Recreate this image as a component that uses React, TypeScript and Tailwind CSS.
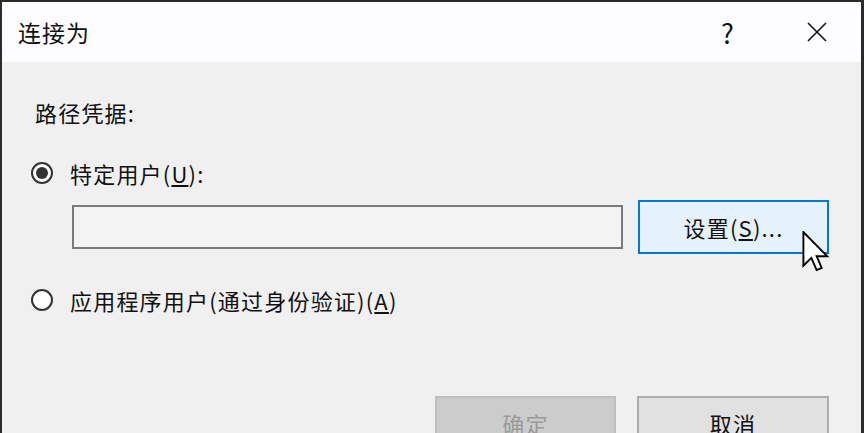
import React from "react";

const font = { fontFamily: '"Noto Sans CJK SC", "Noto Sans", sans-serif' };

const Radio = ({ checked }: { checked?: boolean }) => (
  <span className="flex h-[22px] w-[22px] shrink-0 items-center justify-center rounded-full border-2 border-[#333333] bg-white">
    {checked && <span className="h-[12px] w-[12px] rounded-full bg-[#333333]" />}
  </span>
);

const Cursor = () => (
  <svg className="absolute left-[799px] top-[229px]" width="30" height="42" viewBox="0 0 13 20">
    <path
      d="M0.5 0.5 L0.5 16.5 L4.3 12.8 L6.8 18.6 L9.2 17.6 L6.8 12 L11.8 12 Z"
      fill="#fff"
      stroke="#000"
      strokeWidth="0.9"
      strokeLinejoin="miter"
    />
  </svg>
);

export default function App() {
  return (
    <div
      style={font}
      className="relative h-[433px] w-[864px] overflow-hidden border-l-2 border-r-[3px] border-t-2 border-[#2b2b2b] bg-[#f0f0f0] text-[22px] tracking-[1.2px] text-[#111]"
    >
      {/* title bar */}
      <div className="flex h-[60px] items-center bg-[#fdfdff] pl-[16px]">
        <span className="text-[23px] leading-none tracking-[1px]">连接为</span>
        <span className="ml-auto mr-[72px] text-[27px] leading-none">?</span>
        <svg className="mr-[34px]" width="20" height="20" viewBox="0 0 20 20">
          <path d="M1 1 L19 19 M19 1 L1 19" stroke="#111" strokeWidth="1.6" />
        </svg>
      </div>

      <div className="flex flex-col pl-[29px] pr-[32px] pt-[35px]">
        <div className="flex h-[30px] items-center pl-[4px]">路径凭据:</div>

        <div className="mt-[31px] flex h-[30px] items-center gap-[17px]">
          <Radio checked />
          <span>
            特定用户(<u className="underline-offset-2">U</u>):
          </span>
        </div>

        <div className="mt-[12px] flex h-[54px] items-center gap-[15px] pl-[41px]">
          <div className="h-[44px] w-[551px] border-2 border-[#7a7a7a] bg-[#f3f3f3]" />
          <button className="flex h-[54px] w-[191px] items-center justify-center border-2 border-[#0078d7] bg-[#e5f1fb] text-[22px] tracking-[1.2px]">
            设置(<u className="underline-offset-2">S</u>)...
          </button>
        </div>

        <div className="mt-[31px] flex h-[30px] items-center gap-[17px]">
          <Radio />
          <span>
            应用程序用户(通过身份验证)(<u className="underline-offset-2">A</u>)
          </span>
        </div>

        <div className="mt-[81px] flex justify-end gap-[21px]">
          <button className="flex h-[54px] w-[181px] items-center justify-center border-2 border-[#bfbfbf] bg-[#cccccc] text-[22px] tracking-[1.2px] text-[#9a9a9a]">
            确定
          </button>
          <button className="flex h-[54px] w-[192px] items-center justify-center border-2 border-[#adadad] bg-[#e1e1e1] text-[22px] tracking-[1.2px]">
            取消
          </button>
        </div>
      </div>

      <Cursor />
    </div>
  );
}
